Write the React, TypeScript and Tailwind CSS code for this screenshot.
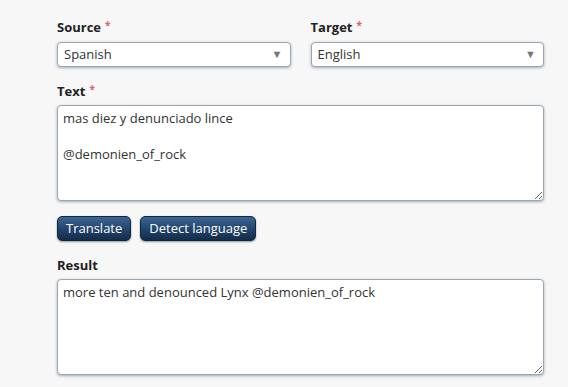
export default function App() {
  const field =
    "w-full rounded-[4px] border border-[#9aa7b3] bg-white shadow-[0_1px_3px_rgba(60,80,110,0.45)] text-[13px] text-[#333]";
  const btn =
    "h-[25px] rounded-[5px] border border-[#0f2540] bg-gradient-to-b from-[#3d6591] via-[#23466f] to-[#132c4b] px-[8px] text-[13px] text-white shadow-[0_1px_2px_rgba(0,0,0,0.4)]";
  const req = <span className="relative -top-[3px] ml-[4px] text-[10px] text-[#e0606e]">*</span>;

  return (
    <div className="h-[387px] w-[568px] bg-[#f7f7f7] font-['Open_Sans',sans-serif]">
      <div className="ml-[57px] w-[487px] pt-[18px]">
        <div className="grid grid-cols-2 gap-[20px]">
          <div>
            <label className="block h-[24px] text-[13px] font-bold text-[#222]">
              Source{req}
            </label>
            <div className={field + " flex h-[25px] items-center justify-between pl-[6px] pr-[7px]"}>
              <span>Spanish</span>
              <span className="text-[11px] text-[#777]">▼</span>
            </div>
          </div>
          <div>
            <label className="block h-[24px] text-[13px] font-bold text-[#222]">
              Target{req}
            </label>
            <div className={field + " flex h-[25px] items-center justify-between pl-[6px] pr-[7px]"}>
              <span>English</span>
              <span className="text-[11px] text-[#777]">▼</span>
            </div>
          </div>
        </div>

        <label className="mt-[15px] block h-[23px] text-[13px] font-bold text-[#222]">
          Text{req}
        </label>
        <textarea
          className={field + " block h-[96px] resize-y px-[5px] pt-[3px] leading-[18px] outline-none"}
          defaultValue={"mas diez y denunciado lince\n\n@demonien_of_rock"}
        />

        <div className="mt-[15px] flex gap-[9px]">
          <button className={btn}>Translate</button>
          <button className={btn}>Detect language</button>
        </div>

        <label className="mt-[15px] block h-[23px] text-[13px] font-bold text-[#222]">Result</label>
        <textarea
          className={field + " block h-[96px] resize-y px-[5px] pt-[3px] leading-[18px] outline-none"}
          defaultValue={"more ten and denounced Lynx @demonien_of_rock"}
        />
      </div>
    </div>
  );
}
